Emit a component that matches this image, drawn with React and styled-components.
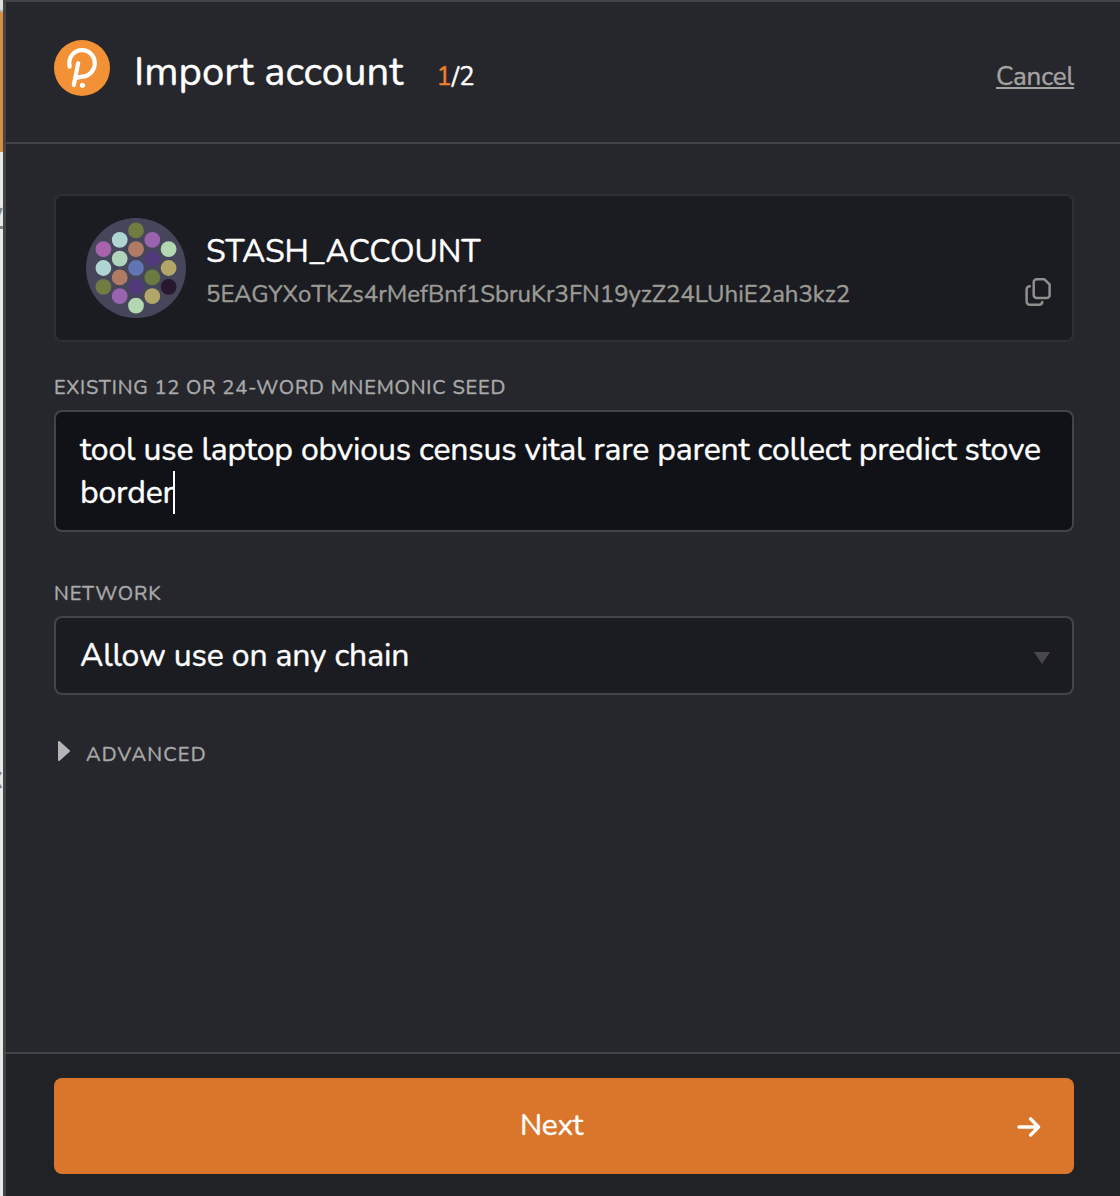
import React from 'react';
import styled, { createGlobalStyle } from 'styled-components';

const GlobalStyle = createGlobalStyle`
  *, *::before, *::after { box-sizing: border-box; }
  body {
    margin: 0;
    background: #26272c;
    color: #fff;
    font-family: Nunito, Lato, "Open Sans", sans-serif;
    -webkit-text-stroke: 0.4px;
  }
  svg { display: block; flex: none; }
`;

const Screen = styled.div`
  display: flex;
  height: 1196px;
  overflow: hidden;
`;

const PageBehind = styled.aside`
  display: flex;
  flex-direction: column;
  flex: none;
  width: 3px;
  overflow: hidden;
  background: #e9e9e8;
  color: #858585;
  font-size: 32px;
  line-height: 36px;
`;

const Toolbar = styled.div`
  height: 12px;
  flex: none;
  background: #dededf;
  border-bottom: 2px solid #b5b6b9;
`;

const Banner = styled.div`
  height: 140px;
  flex: none;
  background: #d98d43;
`;

const Fragment = styled.span`
  align-self: flex-end;
  margin-top: ${(p) => p.$gap}px;
  text-decoration: ${(p) => (p.$link ? 'underline' : 'none')};
`;

const Popup = styled.main`
  display: flex;
  flex-direction: column;
  flex: 1;
  min-width: 0;
  border-top: 2px solid #434448;
  border-left: 3px solid #434448;
  background: #26272c;
`;

const Header = styled.header`
  display: flex;
  height: 142px;
  flex: none;
  padding: 38px 46px 0 48px;
  border-bottom: 2px solid #434448;
`;

const Heading = styled.div`
  display: flex;
  align-items: baseline;
  align-self: flex-start;
  flex: 1;
  margin: 8px 0 0 24px;
`;

const Title = styled.h1`
  margin: 0;
  font-size: 40px;
  font-weight: 400;
  line-height: 49px;
  letter-spacing: 0.05px;
`;

const Step = styled.span`
  margin-left: 33px;
  font-size: 26px;
  letter-spacing: -0.1px;
`;

const CurrentStep = styled.span`
  color: #ed7f2c;
`;

const Cancel = styled.a`
  margin-left: auto;
  color: #a3a3a0;
  font-size: 26px;
  letter-spacing: -0.15px;
  text-decoration: underline;
  text-decoration-thickness: 2px;
  text-underline-offset: 2px;
`;

const Body = styled.section`
  flex: 1;
  padding: 50px 46px 0 48px;
`;

const AccountCard = styled.div`
  display: flex;
  align-items: flex-start;
  height: 148px;
  padding: 22px 21px 0 30px;
  border: 2px solid #2e3031;
  border-radius: 8px;
  background: #1b1c21;
`;

const AccountText = styled.div`
  flex: 1;
  margin: 14px 0 0 20px;
`;

const AccountName = styled.div`
  font-size: 32px;
  line-height: 40px;
  letter-spacing: -0.05px;
`;

const Address = styled.div`
  margin-top: 7px;
  color: #9a9a95;
  font-size: 24px;
  line-height: 30px;
  letter-spacing: -0.01px;
`;

const CopyButton = styled.button`
  margin: 60px 0 0;
  padding: 0;
  border: 0;
  background: none;
  color: #8f8f8d;
`;

const Label = styled.div`
  margin: ${(p) => p.$top}px 0 10px;
  color: #a9a9aa;
  font-size: 20px;
  line-height: 24px;
  letter-spacing: ${(p) => p.$tracking || 0.8}px;
`;

const Field = styled.div`
  padding: 16px 22px 0 24px;
  border: 2px solid #434448;
  border-radius: 8px;
  font-size: 32px;
  line-height: 43px;
  letter-spacing: -0.17px;
`;

const SeedInput = styled(Field)`
  height: 122px;
  background: #111217;
`;

const LastWord = styled.span`
  position: relative;
  &::after {
    content: "";
    position: absolute;
    right: -1px;
    top: 0;
    width: 2px;
    height: 43px;
    background: #fff;
  }
`;

const NetworkSelect = styled(Field)`
  display: flex;
  justify-content: space-between;
  height: 79px;
  background: #1b1c21;
`;

const SelectArrow = styled.svg`
  margin-top: 18px;
`;

const Advanced = styled.div`
  display: flex;
  align-items: center;
  gap: 16px;
  margin: 48px 0 0 4px;
`;

const AdvancedLabel = styled(Label)`
  margin: 0;
`;

const AdvancedArrow = styled.svg`
  margin-top: -8px;
`;

const Footer = styled.footer`
  flex: none;
  height: 144px;
  padding: 24px 46px 0 48px;
  border-top: 2px solid #434448;
  background: #202226;
`;

const NextButton = styled.button`
  display: flex;
  align-items: center;
  width: 100%;
  height: 96px;
  padding: 0 33px 0 32px;
  border: 0;
  border-radius: 8px;
  background: #da762b;
  color: #fff;
  font: inherit;
  font-size: 30px;
  -webkit-text-stroke: 0.4px;
`;

const NextText = styled.span`
  flex: 1;
  padding-bottom: 1px;
  letter-spacing: -0.3px;
`;

const ForwardArrow = styled.svg`
  margin-top: 2px;
`;

function Logo() {
  return (
    <svg width="56" height="56" viewBox="0 0 56 56" fill="none" stroke="#fff" strokeWidth="4.2" strokeLinecap="round">
      <circle cx="28" cy="28" r="28" fill="#f29135" stroke="none" />
      <path d="M15.6 26.6C13.8 17.5 19.8 10.2 28 10.2C35.2 10.2 40.8 16 40.8 23C40.8 30.4 35.2 36.3 28 36.6L23.2 37.6" />
      <path d="M24.2 23.2L19.8 45" />
      <circle cx="28.5" cy="45.3" r="2.6" fill="#fff" stroke="none" />
    </svg>
  );
}

const DOTS = [
  [50, 12.4, '#6f7c42'],
  [33.7, 21.8, '#b0d4d2'],
  [66.3, 21.8, '#9963b0'],
  [17.4, 31.2, '#a963ad'],
  [50, 31.2, '#b07a64'],
  [82.6, 31.2, '#b3d7b1'],
  [33.7, 40.6, '#b0d4bb'],
  [66.3, 40.6, '#513a79'],
  [17.4, 50, '#b0d4d2'],
  [50, 50, '#6275b2'],
  [82.6, 50, '#b2a668'],
  [33.7, 59.4, '#b07a64'],
  [66.3, 59.4, '#6a7a40'],
  [17.4, 68.8, '#6f7c42'],
  [50, 68.8, '#513a79'],
  [82.6, 68.8, '#26182f'],
  [33.7, 78.2, '#9963b0'],
  [66.3, 78.2, '#b2a668'],
  [50, 87.6, '#b3d7b1'],
];

function Identicon() {
  return (
    <svg width="100" height="100" viewBox="0 0 100 100">
      <circle cx="50" cy="50" r="50" fill="#45465a" />
      {DOTS.map(([x, y, color]) => (
        <circle key={`${x}-${y}`} cx={x} cy={y} r="7.9" fill={color} />
      ))}
    </svg>
  );
}

function CopyIcon() {
  return (
    <svg width="26" height="28" viewBox="0 0 26 28" fill="none" stroke="currentColor" strokeWidth="2.5" strokeLinecap="round" strokeLinejoin="round">
      <path d="M11.7 1.3H19.4L24.6 6.4V17A3 3 0 0 1 21.6 20H11.7A3 3 0 0 1 8.7 17V4.3A3 3 0 0 1 11.7 1.3Z" />
      <path d="M4.8 8.2A3.2 3.2 0 0 0 1.6 11.4V23.5A3.2 3.2 0 0 0 4.8 26.7H14.1A3.2 3.2 0 0 0 17.3 24" />
    </svg>
  );
}

export default function App() {
  return (
    <>
      <GlobalStyle />
      <Screen>
        <PageBehind>
          <Toolbar />
          <Banner />
          <Fragment $gap={44} $link>y</Fragment>
          <Fragment $gap={528}>x</Fragment>
        </PageBehind>
        <Popup>
          <Header>
            <Logo />
            <Heading>
              <Title>Import account</Title>
              <Step><CurrentStep>1</CurrentStep>/2</Step>
              <Cancel>Cancel</Cancel>
            </Heading>
          </Header>
          <Body>
            <AccountCard>
              <Identicon />
              <AccountText>
                <AccountName>STASH_ACCOUNT</AccountName>
                <Address>5EAGYXoTkZs4rMefBnf1SbruKr3FN19yzZ24LUhiE2ah3kz2</Address>
              </AccountText>
              <CopyButton aria-label="Copy address"><CopyIcon /></CopyButton>
            </AccountCard>
            <Label $top={34}>EXISTING 12 OR 24-WORD MNEMONIC SEED</Label>
            <SeedInput>
              tool use laptop obvious census vital rare parent collect predict stove <LastWord>border</LastWord>
            </SeedInput>
            <Label $top={50} $tracking={0.9}>NETWORK</Label>
            <NetworkSelect>
              Allow use on any chain
              <SelectArrow width="16" height="12" viewBox="0 0 16 12"><path d="M0 0H16L8 12Z" fill="#48484a" /></SelectArrow>
            </NetworkSelect>
            <Advanced>
              <AdvancedArrow width="12" height="20" viewBox="0 0 12 20">
                <path d="M1 1V19L11 10Z" fill="#b4b4b6" stroke="#b4b4b6" strokeWidth="2" strokeLinejoin="round" />
              </AdvancedArrow>
              <AdvancedLabel $tracking={1.2}>ADVANCED</AdvancedLabel>
            </Advanced>
          </Body>
          <Footer>
            <NextButton>
              <NextText>Next</NextText>
              <ForwardArrow width="24" height="20" viewBox="0 0 24 20" fill="none" stroke="#fff" strokeWidth="3.4" strokeLinecap="round" strokeLinejoin="round">
                <path d="M2 10H21.5M13.6 1.9L21.5 10L13.6 18.1" />
              </ForwardArrow>
            </NextButton>
          </Footer>
        </Popup>
      </Screen>
    </>
  );
}
